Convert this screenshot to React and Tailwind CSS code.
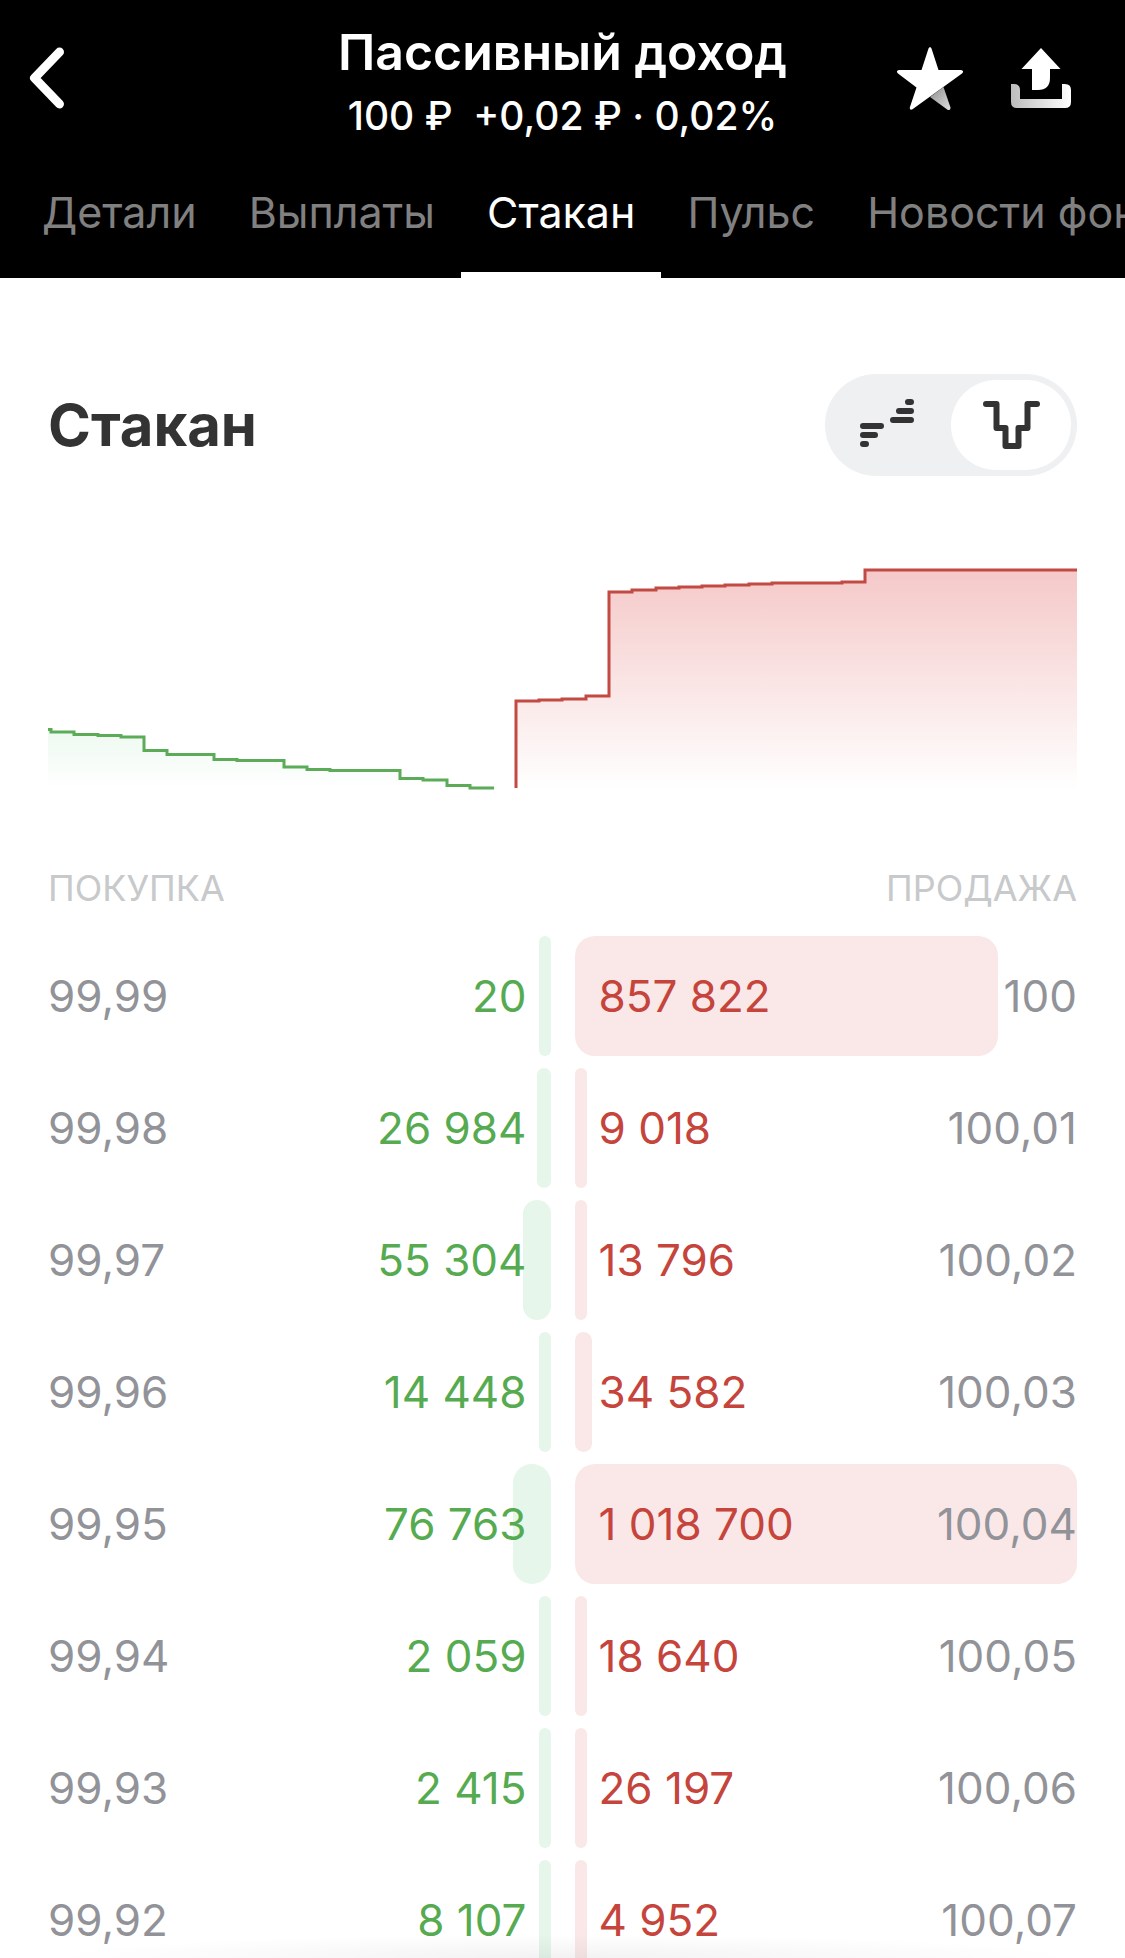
import React, { useState } from "react";

const tabs = ["Детали", "Выплаты", "Стакан", "Пульс", "Новости фонда"];

const bids = [
  { price: "99,99", volume: 20 },
  { price: "99,98", volume: 26984 },
  { price: "99,97", volume: 55304 },
  { price: "99,96", volume: 14448 },
  { price: "99,95", volume: 76763 },
  { price: "99,94", volume: 2059 },
  { price: "99,93", volume: 2415 },
  { price: "99,92", volume: 8107 },
];

const asks = [
  { price: "100", volume: 857822 },
  { price: "100,01", volume: 9018 },
  { price: "100,02", volume: 13796 },
  { price: "100,03", volume: 34582 },
  { price: "100,04", volume: 1018700 },
  { price: "100,05", volume: 18640 },
  { price: "100,06", volume: 26197 },
  { price: "100,07", volume: 4952 },
];

const maxVolume = Math.max(...bids.concat(asks).map((row) => row.volume));

const formatVolume = (n) => String(n).replace(/\B(?=(\d{3})+$)/g, " ");

const barWidth = (volume) => `${(volume / maxVolume) * 100}%`;

const BackIcon = () => (
  <svg width="36" height="64" viewBox="0 0 36 64" fill="none" aria-hidden="true">
    <path d="M31.500 6 6.500 32l25 26" stroke="#fff" strokeWidth="9" strokeLinecap="round" strokeLinejoin="round" />
  </svg>
);

const StarIcon = () => (
  <svg width="66" height="64" viewBox="0 0 66 64" aria-hidden="true">
    <defs>
      <linearGradient id="starLeg" x1="0" y1="0" x2="1" y2="1">
        <stop offset="0" stopColor="#8c8c8c" />
        <stop offset="1" stopColor="#e0e0e0" />
      </linearGradient>
    </defs>
    <path d="M46.500 41 53.500 61.500Q53.500 65 50.500 63.700L33 51Z" fill="url(#starLeg)" />
    <path
      d="M31.500 2.500Q33 -.5 34.500 2.500L41.500 24H64Q67.500 24.800 65 27.500L15.500 63.300Q12.500 64.500 12.800 61.500L19.500 41.500 1 27.500Q-1.500 24.800 2 24H24.500Z"
      fill="#fff"
    />
  </svg>
);

const ShareIcon = () => (
  <svg width="60" height="60" viewBox="0 0 60 60" aria-hidden="true">
    <defs>
      <linearGradient id="tray" x1="0" y1="0" x2="1" y2="0">
        <stop offset="0" stopColor="#bdbdbd" />
        <stop offset="1" stopColor="#fff" />
      </linearGradient>
    </defs>
    <path d="M0 36h3q6 0 6 6v9h42V36h3q6 0 6 6v12q0 6-6 6H6q-6 0-6-6Z" fill="url(#tray)" />
    <path d="M30 0 49.500 21H39v9q0 12-12 12h-6V21H10.500Z" fill="#fff" />
  </svg>
);

const LadderIcon = () => (
  <svg width="54" height="48" viewBox="0 0 54 48" fill="none" aria-hidden="true">
    <path
      d="M3 27h18M3 36h12M3 45h3M33 21h18M39 12h12M48 3h3"
      stroke="#333"
      strokeWidth="6"
      strokeLinecap="round"
    />
  </svg>
);

const DepthIcon = () => (
  <svg width="57" height="48" viewBox="0 0 57 48" fill="none" aria-hidden="true">
    <path
      d="M3 3h10.500v24h9v18h13V27h9V3H54"
      stroke="#333"
      strokeWidth="6"
      strokeLinecap="round"
      strokeLinejoin="round"
    />
  </svg>
);

const greenLine =
  "M0 161.500H3V164H26V166.500H50V167.500H73V169H96V182.500H119V186.500H166V191.500H189V192.500H236V199H259V201.500H282V202.500H352V210.500H375V212H399V217.500H422V220H446";
const redLine =
  "M468 220V133h23v-1h23v-1h24v-3h23V24h23v-2h24v-2h23v-1h23v-1h23v-1h24v-1h23v-1h70v-1h23V2h212";

const DepthChart = () => (
  <svg className="w-full h-auto" viewBox="0 0 1029 222" fill="none" role="img" aria-label="График стакана">
    <defs>
      <linearGradient id="greenFill" x1="0" y1="160" x2="0" y2="222" gradientUnits="userSpaceOnUse">
        <stop offset="0" stopColor="#edf9f0" />
        <stop offset="1" stopColor="#edf9f0" stopOpacity="0" />
      </linearGradient>
      <linearGradient id="redFill" x1="0" y1="0" x2="0" y2="222" gradientUnits="userSpaceOnUse">
        <stop offset="0" stopColor="#f5c8c8" />
        <stop offset="1" stopColor="#f5c8c8" stopOpacity="0" />
      </linearGradient>
    </defs>
    <path d={`${greenLine}V222H0Z`} fill="url(#greenFill)" />
    <path d={`${redLine}V222H468Z`} fill="url(#redFill)" />
    <path d={greenLine} stroke="#5cab58" strokeWidth="3" />
    <path d={redLine} stroke="#c24a43" strokeWidth="3" />
  </svg>
);

const BidTable = () => (
  <table className="block">
    <thead className="block">
      <tr className="block">
        <th colSpan="2" className="block text-left font-normal text-4xl leading-12 text-[#c7c9cb]">
          ПОКУПКА
        </th>
      </tr>
    </thead>
    <tbody className="mt-6 flex flex-col gap-3">
      {bids.map((row) => (
        <tr key={row.price} className="relative flex items-center justify-between h-30">
          <td className="text-[#929399]">{row.price}</td>
          <td className="pr-6 text-[#56ab51]">
            <span
              className="absolute inset-y-0 right-0 -z-10 min-w-3 rounded-[20px] bg-[#e6f6eb]"
              style={{ width: barWidth(row.volume) }}
            />
            {formatVolume(row.volume)}
          </td>
        </tr>
      ))}
    </tbody>
  </table>
);

const AskTable = () => (
  <table className="block">
    <thead className="block">
      <tr className="block">
        <th colSpan="2" className="block text-right font-normal text-4xl leading-12 text-[#c7c9cb]">
          ПРОДАЖА
        </th>
      </tr>
    </thead>
    <tbody className="mt-6 flex flex-col gap-3">
      {asks.map((row) => (
        <tr key={row.price} className="relative flex items-center justify-between h-30">
          <td className="pl-6 text-[#c5443c]">
            <span
              className="absolute inset-y-0 left-0 -z-10 min-w-3 rounded-[20px] bg-[#fae8e8]"
              style={{ width: barWidth(row.volume) }}
            />
            {formatVolume(row.volume)}
          </td>
          <td className="text-[#929399]">{row.price}</td>
        </tr>
      ))}
    </tbody>
  </table>
);

const App = () => {
  const [activeTab, setActiveTab] = useState("Стакан");
  const [view, setView] = useState("depth");

  return (
    <div className="relative flex flex-col h-screen overflow-hidden bg-white font-['Inter',sans-serif]">
      <header className="shrink-0 bg-black text-white">
        <div className="grid grid-cols-[1fr_auto_1fr] items-center pt-6 px-7">
          <button aria-label="Назад" className="justify-self-start pb-2">
            <BackIcon />
          </button>
          <div className="text-center">
            <h1 className="text-[50px] leading-14 font-semibold">Пассивный доход</h1>
            <p className="mt-3 text-[39px] leading-12 font-medium whitespace-pre">100 ₽  +0,02 ₽ · 0,02%</p>
          </div>
          <div className="flex items-center gap-12 justify-self-end pr-[26px] pb-2">
            <button aria-label="В избранное">
              <StarIcon />
            </button>
            <button aria-label="Поделиться">
              <ShareIcon />
            </button>
          </div>
        </div>
        <nav className="mt-5 flex overflow-x-auto [scrollbar-width:none] pl-4">
          {tabs.map((tab) => (
            <button
              key={tab}
              onClick={() => setActiveTab(tab)}
              className={`shrink-0 h-[118px] px-[26px] pb-2 border-b-6 text-[43px] whitespace-nowrap ${
                tab === activeTab ? "border-white text-white" : "border-transparent text-[#808080]"
              }`}
            >
              {tab}
            </button>
          ))}
        </nav>
      </header>

      <main className="isolate flex-1 overflow-y-auto [scrollbar-width:none] px-12 pt-24">
        <div className="flex items-center justify-between">
          <h2 className="text-[58px] leading-none font-bold text-[#333]">Стакан</h2>
          <div className="flex p-[6px] rounded-full bg-[#eef0f2]">
            <button
              aria-label="Лесенка"
              aria-pressed={view === "ladder"}
              onClick={() => setView("ladder")}
              className={`flex items-center justify-center w-30 h-[90px] pr-2 pb-1 rounded-full ${
                view === "ladder" ? "bg-white" : ""
              }`}
            >
              <LadderIcon />
            </button>
            <button
              aria-label="Глубина"
              aria-pressed={view === "depth"}
              onClick={() => setView("depth")}
              className={`flex items-center justify-center w-30 h-[90px] rounded-full ${
                view === "depth" ? "bg-white" : ""
              }`}
            >
              <DepthIcon />
            </button>
          </div>
        </div>

        <div className="mt-[92px]">
          <DepthChart />
        </div>

        <div className="mt-[74px] grid grid-cols-2 gap-6 text-[44px]">
          <BidTable />
          <AskTable />
        </div>
      </main>

      <div className="absolute inset-x-10 bottom-0 h-6 bg-radial-[at_50%_100%] from-black/5 to-transparent to-70% pointer-events-none" />
    </div>
  );
};

export default App;
